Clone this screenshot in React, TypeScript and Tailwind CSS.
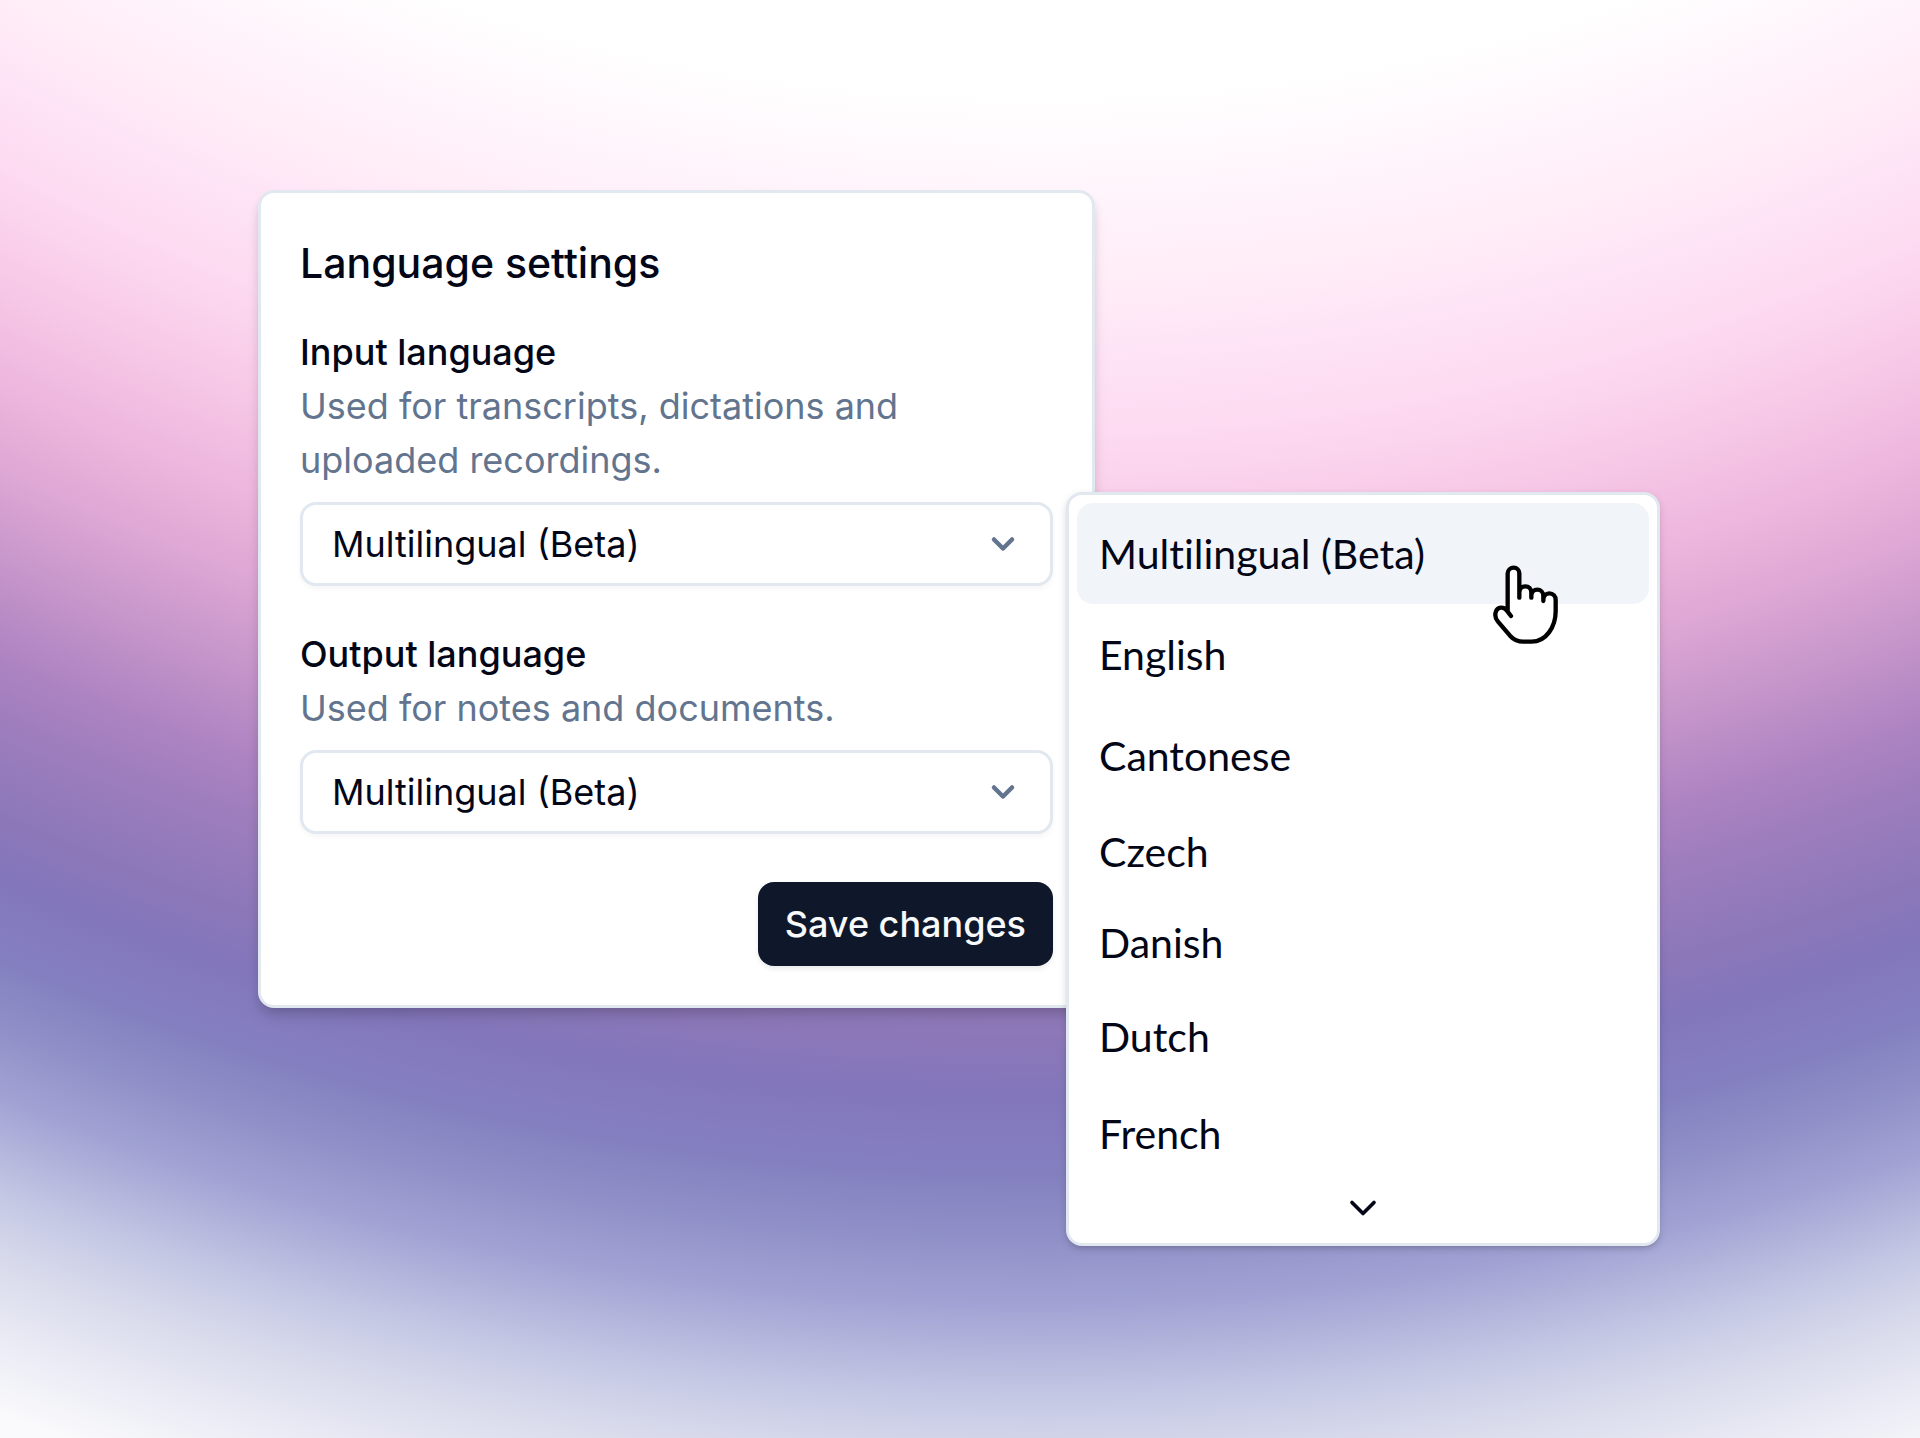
import { useState } from "react";
import { ChevronDown } from "lucide-react";

const LANGUAGES = [
  "Multilingual (Beta)",
  "English",
  "Cantonese",
  "Czech",
  "Danish",
  "Dutch",
  "French",
];

const ROW_HEIGHTS = [
  "h-[101px]",
  "h-[101px]",
  "h-[101px]",
  "h-[91px]",
  "h-[91px]",
  "h-[98px]",
  "h-24",
];

type LanguageFieldProps = {
  id: string;
  label: string;
  description: string;
  value: string;
  onChange: (value: string) => void;
};

function LanguageField({ id, label, description, value, onChange }: LanguageFieldProps) {
  return (
    <div className="flex flex-col">
      <label htmlFor={id} className="text-[36px] leading-[54px] font-medium">
        {label}
      </label>
      <p id={`${id}-hint`} className="max-w-[640px] text-[36px] leading-[54px] text-slate-500">
        {description}
      </p>
      <div className="relative mt-[15px]">
        <select
          id={id}
          aria-describedby={`${id}-hint`}
          value={value}
          onChange={(event) => onChange(event.target.value)}
          className="h-[84px] w-full appearance-none rounded-2xl border-[3px] border-slate-200 bg-white pl-[29px] pr-20 text-[36px] shadow-[0_3px_5px_rgba(0,0,0,0.04)]"
        >
          {LANGUAGES.map((language) => (
            <option key={language}>{language}</option>
          ))}
        </select>
        <ChevronDown
          aria-hidden="true"
          className="pointer-events-none absolute right-8 top-6 size-9 text-slate-500"
          strokeWidth={3}
        />
      </div>
    </div>
  );
}

function HandCursor() {
  return (
    <svg
      aria-hidden="true"
      viewBox="90 70 210 249"
      className="pointer-events-none absolute left-[421px] top-[68px] h-[83px] w-[70px]"
      fill="white"
      stroke="black"
      strokeWidth="13"
      strokeLinecap="round"
      strokeLinejoin="round"
    >
      <path d="M153 229 L140 212 C130 200 113 202 108 215 C104 226 107 238 114 246 L150 288 C162 301 176 306 190 306 H215 C258 306 287 262 287 215 V181 C287 170 279 161 268 161 S250 170 250 181 V184 V169 C250 158 242 150 232 150 S214 158 214 169 V174 V159 C214 148 206 140 196 140 S178 148 178 159 V174 V101 C178 91 170 84 161 84 S143 91 143 101 V215" />
    </svg>
  );
}

export default function App() {
  const [input, setInput] = useState(LANGUAGES[0]);
  const [output, setOutput] = useState(LANGUAGES[0]);

  return (
    <main className="flex min-h-screen items-center justify-center bg-[radial-gradient(170%_278%_at_54%_-188%,#ffffff_70%,#fff4fb_72.6%,#ffebf7_75%,#fde1f5_77%,#fddaf1_78.5%,#f8cbe8_80.8%,#efb9df_83.1%,#dfa8d5_85.4%,#c897cb_87.5%,#ae84c2_89.8%,#9d7dbd_91.5%,#8c78b9_93.6%,#8376bb_95%,#8480c0_97%,#9090c8_98.6%,#a2a3d4_100.3%,#c5c8e4_102.6%,#d9dbec_104.2%,#e9eaf4_105.9%,#fafafc_107.8%)] pb-0.5 pr-0.5 font-[Inter,sans-serif] text-[#020617]">
      <div className="flex items-start">
        <form
          onSubmit={(event) => event.preventDefault()}
          className="flex w-[837px] flex-col rounded-2xl border-[3px] border-slate-200 bg-white p-[39px] shadow-[0_11px_16px_-3px_rgba(0,0,0,0.12),0_5px_11px_-3px_rgba(0,0,0,0.14)]"
        >
          <h1 className="text-[41px] leading-[63px] font-medium">Language settings</h1>
          <div className="mt-[30px] flex flex-col gap-[41px]">
            <LanguageField
              id="input-language"
              label="Input language"
              description="Used for transcripts, dictations and uploaded recordings."
              value={input}
              onChange={setInput}
            />
            <LanguageField
              id="output-language"
              label="Output language"
              description="Used for notes and documents."
              value={output}
              onChange={setOutput}
            />
          </div>
          <button
            type="submit"
            className="mt-12 h-[84px] self-end whitespace-nowrap rounded-2xl bg-slate-900 px-[27px] text-[36px] font-medium text-slate-50 shadow-[0_3px_5px_rgba(0,0,0,0.08)]"
          >
            Save changes
          </button>
        </form>

        <div className="relative -ml-[29px] mt-[302px] flex w-[594px] flex-col rounded-2xl border-[3px] border-slate-200 bg-white px-2 pt-2 pb-2.5 font-[Lato,sans-serif] shadow-[0_3px_8px_rgba(0,0,0,0.12),0_3px_5px_-2px_rgba(0,0,0,0.14)]">
          <div role="listbox" aria-label="Input language options" className="flex flex-col">
            {LANGUAGES.map((language, index) => (
              <button
                key={language}
                type="button"
                role="option"
                aria-selected={language === input}
                onClick={() => setInput(language)}
                className={`${ROW_HEIGHTS[index]} rounded-2xl px-[22px] text-left text-[41px] [font-variant-ligatures:none] ${
                  language === input ? "bg-slate-100" : "bg-white"
                }`}
              >
                {language}
              </button>
            ))}
          </div>
          <button
            type="button"
            aria-label="Show more languages"
            className="flex h-[51px] items-center justify-center"
          >
            <ChevronDown aria-hidden="true" className="size-11" strokeWidth={2} />
          </button>
          <HandCursor />
        </div>
      </div>
    </main>
  );
}
